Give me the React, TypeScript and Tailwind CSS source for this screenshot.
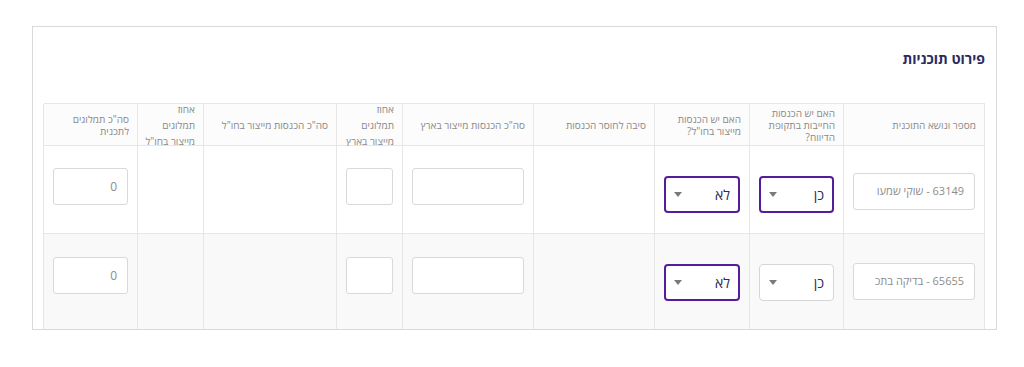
import React from "react";

const FONT = { fontFamily: '"Open Sans", "Liberation Sans", "DejaVu Sans", sans-serif' };

const cols = "grid-cols-[141px_94px_95px_121px_131px_66px_133px_66px_94px]";

function HeaderCell({ lines, lh = "leading-[12px]" }: { lines: string[]; lh?: string }) {
  return (
    <div className={`h-[42px] border-l border-b border-[#e6e6e6] bg-[#fcfcfc] flex items-center justify-start px-[8px] text-[10px] text-[#8a8a8a] ${lh}`}>
      <div className="text-right whitespace-nowrap">
        {lines.map((l, i) => (
          <div key={i}>{l}</div>
        ))}
      </div>
    </div>
  );
}

function Caret() {
  return (
    <svg width="8" height="5" viewBox="0 0 8 5" className="shrink-0">
      <path d="M0 0 L8 0 L4 5 Z" fill="#7a7a7a" />
    </svg>
  );
}

function Select({ value, focused }: { value: string; focused?: boolean }) {
  return (
    <div
      className={`h-[37px] w-full rounded-[4px] bg-white flex items-center justify-between ${
        focused ? "border-2 border-[#561c9c] pr-[8px] pl-[8px]" : "border border-[#d6d6d6] pr-[9px] pl-[9px]"
      }`}
    >
      <span className="text-[14px] text-[#2e2b5c]">{value}</span>
      <Caret />
    </div>
  );
}

function Input({ value, big }: { value?: string; big?: boolean }) {
  return (
    <div className={`h-[37px] w-full rounded-[3px] bg-white border border-[#d9d9d9] flex items-center px-[10px] ${big ? "text-[12px]" : "text-[11px]"} text-[#8c8c8c]`}>
      {value}
    </div>
  );
}

function Cell({ children, pt, bg, h }: { children?: React.ReactNode; pt: string; bg: string; h: string }) {
  return <div className={`${h} border-l border-b border-[#e6e6e6] px-[9px] ${pt} ${bg}`}>{children}</div>;
}

function Row({ name, no1Focused, yesFocused, bg, r2 }: { name: string; no1Focused?: boolean; yesFocused?: boolean; bg: string; r2?: boolean }) {
  const h = r2 ? "h-[110px]" : "h-[88px]";
  const p = r2 ? "pt-[23px]" : "pt-[22px]";
  return (
    <>
      <Cell h={h} pt={r2 ? "pt-[29px]" : "pt-[27px]"} bg={bg}>
        <Input value={name} />
      </Cell>
      <Cell h={h} pt="pt-[30px]" bg={bg}>
        <Select value="כן" focused={yesFocused} />
      </Cell>
      <Cell h={h} pt="pt-[30px]" bg={bg}>
        <Select value="לא" focused={no1Focused} />
      </Cell>
      <Cell h={h} pt={p} bg={bg} />
      <Cell h={h} pt={p} bg={bg}>
        <Input />
      </Cell>
      <Cell h={h} pt={p} bg={bg}>
        <Input />
      </Cell>
      <Cell h={h} pt={p} bg={bg} />
      <Cell h={h} pt={p} bg={bg} />
      <Cell h={h} pt={p} bg={bg}>
        <Input value="0" big />
      </Cell>
    </>
  );
}

export default function App() {
  return (
    <div className="w-[1024px] h-[367px] bg-white pt-[26px] pl-[32px]" style={FONT}>
      <div dir="rtl" className="w-[965px] h-[304px] border border-[#d9d9d9] bg-white overflow-hidden pr-[11px] pl-[11px]">
        <div className="pt-[22px] h-[76px]">
          <div className="text-[14px] leading-[20px] font-bold text-[#2c2a5c]">פירוט תוכניות</div>
        </div>
        <div className={`grid ${cols} border-t border-r border-[#e6e6e6] w-[941px]`}>
          <HeaderCell lines={["מספר ונושא התוכנית"]} />
          <HeaderCell lines={["האם יש הכנסות", "החייבות בתקופת", "הדיווח?"]} />
          <HeaderCell lines={["האם יש הכנסות", 'מייצור בחו"ל?']} />
          <HeaderCell lines={["סיבה לחוסר הכנסות"]} />
          <HeaderCell lines={['סה"כ הכנסות מייצור בארץ']} />
          <HeaderCell lines={["אחוז", "תמלוגים", "מייצור בארץ"]} lh="leading-[16px]" />
          <HeaderCell lines={['סה"כ הכנסות מייצור בחו"ל']} />
          <HeaderCell lines={["אחוז", "תמלוגים", 'מייצור בחו"ל']} lh="leading-[16px]" />
          <HeaderCell lines={['סה"כ תמלוגים', "לתכנית"]} />

          <Row name="63149 - שוקי שמעו" yesFocused no1Focused bg="bg-white" />
          <Row name="65655 - בדיקה בתכ" no1Focused bg="bg-[#f9f9f9]" r2 />
        </div>
      </div>
    </div>
  );
}
